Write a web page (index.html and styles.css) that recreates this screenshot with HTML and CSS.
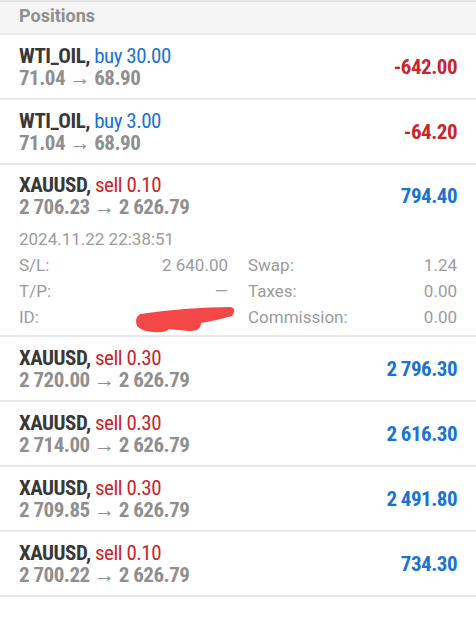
FILE: index.html
```html
<!DOCTYPE html>
<html lang="en">

<head>
  <meta charset="UTF-8" />
  <meta name="viewport" content="width=device-width, initial-scale=1.0" />
  <title>Positions</title>
  <link rel="stylesheet" href="styles.css">
</head>

<body>
  <div class="panel">
    <!-- 标题 -->
    <div class="header">Positions</div>

    <div class="row">
      <div class="info">
        <div class="title">WTI_OIL, <span class="buy">buy 30.00</span></div>
        <div class="prices">71.04 &rarr; 68.90</div>
      </div>
      <div class="profit loss">-642.00</div>
    </div>

    <div class="row">
      <div class="info">
        <div class="title">WTI_OIL, <span class="buy">buy 3.00</span></div>
        <div class="prices">71.04 &rarr; 68.90</div>
      </div>
      <div class="profit loss">-64.20</div>
    </div>

    <!-- 展开的订单 -->
    <div class="row open">
      <div class="top">
        <div class="info">
          <div class="title">XAUUSD, <span class="sell">sell 0.10</span></div>
          <div class="prices">2 706.23 &rarr; 2 626.79</div>
        </div>
        <div class="profit">794.40</div>
      </div>
      <div class="date">2024.11.22 22:38:51</div>
      <div class="details">
        <div class="pair"><span>S/L:</span><span>2 640.00</span></div>
        <div class="pair"><span>Swap:</span><span>1.24</span></div>
        <div class="pair"><span>T/P:</span><span>&mdash;</span></div>
        <div class="pair"><span>Taxes:</span><span>0.00</span></div>
        <div class="pair"><span>ID:</span>
          <span class="hidden">
            <svg width="104" height="26" viewBox="0 0 104 26">
              <path d="M11 10 Q60 3 102 3 Q108 5 103 12 Q85 17 72 19 Q72 27 60 27 Q48 26 40 25 Q36 29 24 28 Q12 27 8 22 Q5 14 11 10 Z" />
            </svg>
          </span>
        </div>
        <div class="pair"><span>Commission:</span><span>0.00</span></div>
      </div>
    </div>

    <div class="row">
      <div class="info">
        <div class="title">XAUUSD, <span class="sell">sell 0.30</span></div>
        <div class="prices">2 720.00 &rarr; 2 626.79</div>
      </div>
      <div class="profit">2 796.30</div>
    </div>

    <div class="row">
      <div class="info">
        <div class="title">XAUUSD, <span class="sell">sell 0.30</span></div>
        <div class="prices">2 714.00 &rarr; 2 626.79</div>
      </div>
      <div class="profit">2 616.30</div>
    </div>

    <div class="row">
      <div class="info">
        <div class="title">XAUUSD, <span class="sell">sell 0.30</span></div>
        <div class="prices">2 709.85 &rarr; 2 626.79</div>
      </div>
      <div class="profit">2 491.80</div>
    </div>

    <div class="row">
      <div class="info">
        <div class="title">XAUUSD, <span class="sell">sell 0.10</span></div>
        <div class="prices">2 700.22 &rarr; 2 626.79</div>
      </div>
      <div class="profit">734.30</div>
    </div>

    <div class="footer"></div>
  </div>
</body>

</html>
```

FILE: styles.css
```css
/* 页面 */
body {
  margin: 0;
  background: #fff;
  font-family: Roboto, "Noto Sans", sans-serif;
}

.panel {
  width: 476px;
  border-top: 2px solid #e4e4e4;
}

/* 标题栏 */
.header {
  height: 31px;
  line-height: 28px;
  padding-left: 19px;
  background: #f5f5f5;
  border-bottom: 2px solid #e6e6e6;
  color: #8e8e8e;
  font-size: 18px;
  font-weight: bold;
}

/* 每一行 */
.row {
  display: flex;
  justify-content: space-between;
  align-items: center;
  height: 63px;
  padding: 0 19px;
  border-bottom: 2px solid #e8e8e8;
}

.row.open {
  display: block;
  height: auto;
  padding: 9px 19px 5px;
}

.top {
  display: flex;
  justify-content: space-between;
  align-items: center;
}

.title,
.prices,
.profit {
  font-size: 21px;
  line-height: 22px;
  font-weight: bold;
  font-stretch: 85%;
  letter-spacing: -0.5px;
}

.title {
  color: #383838;
}

.buy {
  color: #1a73d1;
  font-weight: normal;
}

.sell {
  color: #c8252c;
  font-weight: normal;
}

.prices {
  color: #8f8f8f;
}

.profit {
  color: #1a73d1;
}

.profit.loss {
  color: #c8252c;
}

/* 详细信息 */
.date,
.details {
  color: #9b9b9b;
  font-size: 17px;
  line-height: 26px;
}

.date {
  margin-top: 8px;
}

.details {
  display: grid;
  grid-template-columns: 1fr 1fr;
  column-gap: 20px;
}

.pair {
  display: flex;
  justify-content: space-between;
  align-items: center;
}

.hidden {
  display: flex;
  margin-right: -5px;
}

.hidden svg {
  overflow: visible;
}

.hidden path {
  fill: #f44848;
}

.footer {
  height: 28px;
  border-bottom: 1px solid #eeeeee;
}
```
